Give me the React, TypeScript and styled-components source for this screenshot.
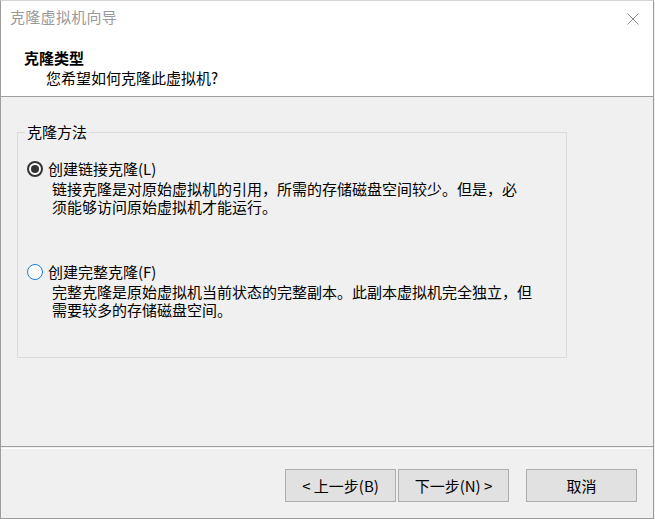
import React from "react";
import styled, { createGlobalStyle } from "styled-components";

const GlobalStyle = createGlobalStyle`
  html, body {
    margin: 0;
    padding: 0;
    background: #f0f0f0;
  }
  body {
    font-family: "Noto Sans CJK SC", "Noto Sans", sans-serif;
    font-size: 15px;
    color: #000;
  }
`;

const Window = styled.div`
  box-sizing: border-box;
  width: 654px;
  height: 519px;
  display: flex;
  flex-direction: column;
  background: #f0f0f0;
  border: 1px solid #9c9c9c;
  border-top-color: #d4d4d4;
`;

const Top = styled.div`
  height: 96px;
  box-sizing: border-box;
  display: flex;
  flex-direction: column;
  background: #fff;
  border-bottom: 1px solid #a0a0a0;
`;

const TitleBar = styled.div`
  height: 32px;
  display: flex;
  align-items: center;
  justify-content: space-between;
  padding-left: 9px;
`;

const TitleText = styled.span`
  color: #999;
  font-size: 15px;
  line-height: 20px;
  letter-spacing: 0.3px;
`;

const CloseBox = styled.div`
  width: 40px;
  height: 32px;
  display: flex;
  align-items: center;
  justify-content: center;
  padding-top: 4px;
  box-sizing: border-box;
`;

const Header = styled.div`
  padding: 15px 0 0 23px;
`;

const HeaderTitle = styled.div`
  font-weight: bold;
  line-height: 20px;
`;

const HeaderSub = styled.div`
  line-height: 20px;
  padding-left: 22px;
`;

const Content = styled.div`
  flex: 1;
  padding: 26px 0 0 16px;
`;

const Group = styled.fieldset`
  box-sizing: border-box;
  width: 550px;
  margin: 0;
  padding: 19px 0 38px 9px;
  border: 1px solid #dcdcdc;
  min-inline-size: 0;
`;

const Legend = styled.legend`
  padding: 0 2px;
  margin-left: -2px;
  line-height: 18px;
`;

const Option = styled.div<{ $gap?: number }>`
  margin-top: ${(p) => p.$gap ?? 0}px;
`;

const OptionRow = styled.label`
  display: flex;
  align-items: center;
  gap: 5px;
  line-height: 18px;
`;

const Radio = styled.span<{ $checked?: boolean }>`
  box-sizing: border-box;
  width: 16px;
  height: 16px;
  border-radius: 50%;
  background: #fff;
  border: ${(p) => (p.$checked ? "2px solid #333" : "1.5px solid #1a7fd6")};
  display: flex;
  align-items: center;
  justify-content: center;

  &::after {
    content: "";
    display: ${(p) => (p.$checked ? "block" : "none")};
    width: 8px;
    height: 8px;
    border-radius: 50%;
    background: #333;
  }
`;

const Desc = styled.div`
  margin: 2px 0 0 25px;
  line-height: 18px;
  white-space: nowrap;
`;

const Footer = styled.div`
  height: 72px;
  box-sizing: border-box;
  border-top: 1px solid #a0a0a0;
  box-shadow: inset 0 1px 0 #f0f0f0, inset 0 2px 0 #fff;
  display: flex;
  justify-content: flex-end;
  align-items: flex-start;
  padding: 22px 16px 0 0;
`;

const Button = styled.button<{ $gapLeft?: number }>`
  box-sizing: border-box;
  width: 111px;
  height: 33px;
  margin-left: ${(p) => p.$gapLeft ?? 0}px;
  background: #e1e1e1;
  border: 1px solid #adadad;
  font-family: "Noto Sans CJK SC", "Noto Sans", sans-serif;
  font-size: 15px;
  color: #000;
  padding: 0;
`;

const CloseIcon = () => (
  <svg width="12" height="12" viewBox="0 0 12 12">
    <path d="M0.5 0.5 L11.5 11.5 M11.5 0.5 L0.5 11.5" stroke="#8a8a8a" strokeWidth="1" fill="none" />
  </svg>
);

const App: React.FC = () => {
  return (
    <>
      <GlobalStyle />
      <Window>
        <Top>
          <TitleBar>
            <TitleText>克隆虚拟机向导</TitleText>
            <CloseBox>
              <CloseIcon />
            </CloseBox>
          </TitleBar>
          <Header>
            <HeaderTitle>克隆类型</HeaderTitle>
            <HeaderSub>您希望如何克隆此虚拟机?</HeaderSub>
          </Header>
        </Top>
        <Content>
          <Group>
            <Legend>克隆方法</Legend>
            <Option>
              <OptionRow>
                <Radio $checked />
                创建链接克隆(L)
              </OptionRow>
              <Desc>
                链接克隆是对原始虚拟机的引用，所需的存储磁盘空间较少。但是，必
                <br />
                须能够访问原始虚拟机才能运行。
              </Desc>
            </Option>
            <Option $gap={47}>
              <OptionRow>
                <Radio />
                创建完整克隆(F)
              </OptionRow>
              <Desc>
                完整克隆是原始虚拟机当前状态的完整副本。此副本虚拟机完全独立，但
                <br />
                需要较多的存储磁盘空间。
              </Desc>
            </Option>
          </Group>
        </Content>
        <Footer>
          <Button>&lt; 上一步(B)</Button>
          <Button $gapLeft={2}>下一步(N) &gt;</Button>
          <Button $gapLeft={17}>取消</Button>
        </Footer>
      </Window>
    </>
  );
};

export default App;
